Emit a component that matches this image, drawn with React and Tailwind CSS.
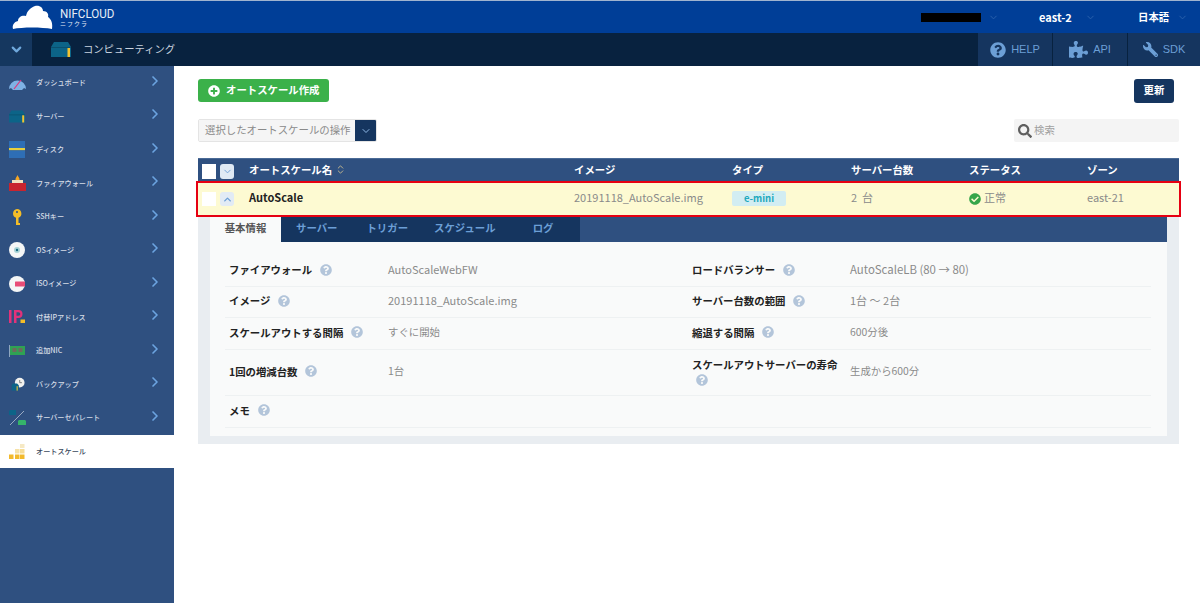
import React from "react";
import { ChevronDown, ChevronRight, ChevronUp, ChevronsUpDown } from "lucide-react";
import { FaQuestionCircle, FaPuzzlePiece, FaWrench, FaCheckCircle, FaPlusCircle, FaSearch } from "react-icons/fa";

const Server = ({ w = 18, h = 14 }) => (
  <svg width={w} height={h} viewBox="0 0 20 15">
    <path d="M3 0H17L20 5V15H0V5Z" fill="#0c6488" />
    <path d="M0 5H20V6H0Z" fill="#0a506f" />
    <rect x="16.5" y="6" width="2.5" height="9" fill="#f2c230" />
  </svg>
);

const icons = {
  dash: (
    <svg width="17" height="15" viewBox="0 0 17 15">
      <path d="M0 14A8.5 8.5 0 1 1 17 14L15 13 13 15H4L2 13Z" fill="#7fb2e5" />
      <path d="M5 14L12 5" stroke="#e0357a" strokeWidth="1.2" />
      <path d="M8.5 1V3M3 4L4 5M14 4L13 5" stroke="#2f5080" strokeWidth="0.8" />
    </svg>
  ),
  server: <Server w={16} h={13} />,
  disk: (
    <svg width="16" height="17" viewBox="0 0 16 17">
      <rect width="16" height="7" fill="#2e6eb5" />
      <rect y="7" width="16" height="2.4" fill="#e8cf3c" />
      <rect y="9.4" width="16" height="7.6" fill="#2e6eb5" />
    </svg>
  ),
  fw: (
    <svg width="17" height="16" viewBox="0 0 17 16">
      <path d="M8.5 0C9 2 11 3 10.5 5H6.5C6 3 8 2 8.500 0Z" fill="#f6a623" />
      <rect x="3" y="5" width="11" height="3" fill="#f2e2c0" />
      <rect y="8" width="17" height="8" fill="#c8242f" />
    </svg>
  ),
  key: (
    <svg width="12" height="16" viewBox="0 0 12 16">
      <path d="M6 0A4.500 4.500 0 0 1 7.500 8.700V14H9V16H5V8.700A4.500 4.500 0 0 1 6 0Z" fill="#f5bd27" />
      <circle cx="6" cy="3" r="1" fill="#2f5080" />
    </svg>
  ),
  os: (
    <svg width="16" height="16" viewBox="0 0 16 16">
      <circle cx="8" cy="8" r="8" fill="#f4f6f6" />
      <circle cx="8" cy="8" r="3" fill="#a8d3d6" />
      <circle cx="8" cy="8" r="1.200" fill="#176a80" />
    </svg>
  ),
  iso: (
    <svg width="16" height="16" viewBox="0 0 16 16">
      <circle cx="8" cy="8" r="8" fill="#f4f6f6" />
      <rect x="6" y="5.500" width="10" height="5" rx="0.500" fill="#e84d77" />
    </svg>
  ),
  ip: (
    <svg width="17" height="16" viewBox="0 0 17 16">
      <rect x="0" y="1" width="2.500" height="13" fill="#e2327a" />
      <path d="M5 1H9.500A3.500 3.500 0 0 1 9.500 9H7.500V14H5ZM7.500 3.200V6.800H9.500A1.800 1.800 0 0 0 9.500 3.200Z" fill="#e2327a" />
      <rect x="11.500" y="10.500" width="4.500" height="3.500" fill="#f5bd27" />
    </svg>
  ),
  nic: (
    <svg width="16" height="12" viewBox="0 0 16 12">
      <rect x="1" y="1" width="15" height="9" fill="#2fa253" />
      <rect width="1" height="12" fill="#8fa6bf" />
      <rect x="3.500" y="3" width="4" height="4" fill="#6d6a5c" />
      <rect x="9.500" y="3" width="4" height="4" fill="#6d6a5c" />
    </svg>
  ),
  backup: (
    <svg width="15" height="14" viewBox="0 0 17 15">
      <circle cx="11" cy="6" r="5.500" fill="#f1f1ee" />
      <path d="M11 3V6H13.500" stroke="#555" strokeWidth="0.800" fill="none" />
      <path d="M3 7H8L10 9V15H2V9Z" fill="#0c6488" />
      <rect x="7.500" y="10" width="1.200" height="5" fill="#f2c230" />
    </svg>
  ),
  sep: (
    <svg width="17" height="15" viewBox="0 0 17 15">
      <path d="M1 15L15 1" stroke="#b6c3d3" strokeWidth="0.800" />
      <path d="M1 0H7V5H0V1Z" fill="#0c6488" />
      <path d="M10 10H16L17 11V15H9V11Z" fill="#35b36a" />
    </svg>
  ),
  auto: (
    <svg width="16" height="15" viewBox="0 0 16 15">
      <rect x="11" y="0" width="4.500" height="4" fill="#f6e9c4" />
      <rect x="6" y="5" width="4.500" height="4.500" fill="#f6e2a8" />
      <rect x="11" y="5" width="4.500" height="4.500" fill="#f6dd97" />
      <rect x="0" y="10.500" width="4.500" height="4.500" fill="#f2b92c" />
      <rect x="6" y="10.500" width="4.500" height="4.500" fill="#f2b92c" />
      <rect x="11" y="10.500" width="4.500" height="4.500" fill="#f2b92c" />
    </svg>
  ),
};

const navItems = [
  ["dash", "ダッシュボード"],
  ["server", "サーバー"],
  ["disk", "ディスク"],
  ["fw", "ファイアウォール"],
  ["key", "SSHキー"],
  ["os", "OSイメージ"],
  ["iso", "ISOイメージ"],
  ["ip", "付替IPアドレス"],
  ["nic", "追加NIC"],
  ["backup", "バックアップ"],
  ["sep", "サーバーセパレート"],
];

const Help = () => <FaQuestionCircle className="text-[#b3c5da] text-[12px] shrink-0" />;

const Cell = ({ label, value, wrap, valueSize = "text-[10.400px]", labelW = "w-[163px]" }) => (
  <div className="flex items-center pb-[3px]">
    <div className={`${labelW} pl-1 shrink-0 text-[10.400px] font-bold text-[#222] leading-[15px]`}>
      {wrap ? (
        <>
          <div className="whitespace-nowrap">{label}</div>
          <div className="pl-1 pt-0.5"><Help /></div>
        </>
      ) : (
        <div className="flex items-center gap-[8px] whitespace-nowrap">{label}<Help /></div>
      )}
    </div>
    <div className={`${valueSize} text-[#8a8a8a] whitespace-nowrap`}>{value}</div>
  </div>
);

const DetailRow = ({ h, left, right }) => (
  <div className={`grid grid-cols-[463px_1fr] border-b border-[#eef1f2] ${h}`}>
    {left}
    {right || <div />}
  </div>
);

const TextCell = ({ className = "", children }) => <div className={`pb-[3px] ${className}`}>{children}</div>;

export default function App() {
  return (
    <div className="w-[1200px] h-[603px] overflow-hidden flex flex-col bg-white font-['Noto_Sans_CJK_JP','Noto_Sans',sans-serif]">
      <header className="h-[33px] shrink-0 bg-[#003e97] border-t border-[#9fb3cf] flex items-center">
        <div className="pl-[12px] flex items-center gap-[7px] w-[921px]">
          <svg width="41" height="24" viewBox="0 0 41 24">
            <path d="M1 24C0 20 2 17 6 16 6 12 10 10 14 11 15 6 18 3 23 1 28 0 31 3 31 6 35 6 37 9 36 12 39 14 41 18 40 24 30 22 10 22 1 24Z" fill="#fff" />
          </svg>
          <div className="flex flex-col text-[#e6edf6]">
            <span className="font-['Roboto',sans-serif] text-[13.500px] leading-[14px] scale-x-[0.86] origin-left">NIFCLOUD</span>
            <span className="text-[6px] leading-[8px] tracking-[1px]">ニフクラ</span>
          </div>
        </div>
        <div className="w-[60px] h-[9px] bg-black" />
        <ChevronDown size={11} className="ml-[7px] text-[#2d63ad]" />
        <span className="ml-[40px] text-[11px] font-bold text-white w-[43px]">east-2</span>
        <ChevronDown size={11} className="ml-[3px] text-[#2d63ad]" />
        <span className="ml-[42px] text-[10.400px] font-bold text-white">日本語</span>
        <ChevronDown size={11} className="ml-[8px] text-[#2d63ad]" />
      </header>

      <div className="h-[33px] shrink-0 bg-[#08223f] flex items-stretch">
        <div className="w-[32px] bg-[#15375f] flex items-center justify-center">
          <ChevronDown size={15} strokeWidth={3.500} className="text-[#6fa8dc]" />
        </div>
        <div className="pl-[19px] flex items-center w-[946px]">
          <Server w={20} h={15} />
          <span className="ml-[12px] pb-[2px] text-[10.300px] text-[#c9d3df]">コンピューティング</span>
        </div>
        <div className="flex-1 flex text-[11px] text-[#6c9fd6] font-['Liberation_Sans',sans-serif]">
          <div className="w-[75px] bg-[#15355f] border-r border-[#08223f] flex items-center justify-center gap-[5px]">
            <FaQuestionCircle className="text-[16px] text-[#6c9fd6]" />HELP
          </div>
          <div className="w-[75px] bg-[#15355f] border-r border-[#08223f] flex items-center justify-center gap-[5px]">
            <FaPuzzlePiece className="text-[19px] text-[#6c9fd6]" />API
          </div>
          <div className="flex-1 bg-[#15355f] flex items-center justify-center gap-[5px]">
            <FaWrench className="text-[15px] text-[#6c9fd6] -scale-x-100" />SDK
          </div>
        </div>
      </div>

      <div className="flex-1 flex min-h-0">
        <nav className="w-[174px] shrink-0 bg-[#2f5080]">
          {navItems.map(([k, label]) => (
            <div key={k} className="h-[33.500px] flex items-center relative">
              <div className="w-[18px] ml-[8px] mr-[10px] shrink-0 flex items-center justify-center">{icons[k]}</div>
              <span className="text-[7.150px] font-medium text-[#d5dce6] whitespace-nowrap">{label}</span>
              <ChevronRight size={16} strokeWidth={2.500} className="text-[#6ca4e0] ml-auto mr-[11px] -mt-[4px]" />
            </div>
          ))}
          <div className="h-[33.500px] flex items-center bg-white">
            <div className="w-[18px] ml-[8px] mr-[10px] shrink-0 flex items-center justify-center">{icons.auto}</div>
            <span className="text-[7.150px] font-medium text-[#3b4a5c] whitespace-nowrap">オートスケール</span>
          </div>
        </nav>

        <main className="flex-1 min-w-0 pl-[24px] pr-[21px] pt-[13px]">
          <div className="flex items-start justify-between pr-[5px]">
            <button className="w-[131px] h-[23px] bg-[#3bb14a] rounded-[3px] flex items-center pl-[10px] gap-[6px] text-white text-[10.400px] font-bold whitespace-nowrap">
              <FaPlusCircle className="text-[12px]" /><span className="pb-[2px]">オートスケール作成</span>
            </button>
            <button className="w-[40px] h-[24px] pb-[2px] bg-[#15355f] rounded-[3px] text-white text-[10.400px] font-bold">更新</button>
          </div>

          <div className="flex items-center justify-between mt-[16px]">
            <div className="flex h-[23px] w-[179px] rounded-[2px] border border-[#e4e4e4] overflow-hidden">
              <div className="flex-1 bg-[#f5f5f5] pl-[6px] pb-[2px] text-[10.400px] text-[#8a8a8a] flex items-center whitespace-nowrap">選択したオートスケールの操作</div>
              <div className="w-[21px] bg-[#15355f] flex items-center justify-center">
                <ChevronDown size={12} className="text-[#8fb8e6]" />
              </div>
            </div>
            <div className="w-[165px] h-[23px] bg-[#f4f4f4] rounded-[2px] flex items-center pl-[4px] gap-[2px] text-[10.400px] text-[#a0a0a0]">
              <FaSearch className="text-[14px] text-[#5f5f5f]" /><span className="pb-[2px]">検索</span>
            </div>
          </div>

          <div className="mt-[16px] h-[25px] bg-[#2f5080] border-t border-[#4a6a96] grid grid-cols-[51px_325px_158px_119px_118px_118px_1fr] items-center text-white text-[10.400px] font-bold">
            <div className="flex items-center pl-[4px] gap-[4px]">
              <div className="w-[14px] h-[15px] bg-white" />
              <div className="w-[14px] h-[15px] bg-[#dfe9f4] rounded-[3px] flex items-center justify-center">
                <ChevronDown size={11} className="text-[#6c9fd6]" />
              </div>
            </div>
            <TextCell className="flex items-center gap-[3px]">オートスケール名<ChevronsUpDown size={11} className="text-[#c9bb8f]" /></TextCell>
            <TextCell>イメージ</TextCell>
            <TextCell>タイプ</TextCell>
            <TextCell>サーバー台数</TextCell>
            <TextCell>ステータス</TextCell>
            <TextCell>ゾーン</TextCell>
          </div>

          <div className="relative z-10 h-[32px] bg-[#fdfad2] outline-2 outline-[#e60012] grid grid-cols-[51px_325px_158px_119px_118px_118px_1fr] items-center text-[11px] text-[#8a8a8a]">
            <div className="flex items-center pl-[4px] gap-[4px]">
              <div className="w-[14px] h-[14px] bg-white" />
              <div className="w-[14px] h-[14px] bg-[#e2ebf5] rounded-[3px] flex items-center justify-center">
                <ChevronUp size={11} strokeWidth={3} className="text-[#6c9fd6]" />
              </div>
            </div>
            <TextCell className="font-bold text-[#222]">AutoScale</TextCell>
            <TextCell>20191118_AutoScale.img</TextCell>
            <div className="flex items-center pb-[1px]">
              <span className="w-[54px] h-[15px] leading-[14px] text-center bg-[#d2edf2] rounded-[2px] text-[#1ea9bd] font-bold text-[9.500px]">e-mini</span>
            </div>
            <TextCell className="whitespace-pre">2  台</TextCell>
            <div className="flex items-center gap-[3px]"><FaCheckCircle className="text-[12px] text-[#35a64a]" /><span className="pb-[3px]">正常</span></div>
            <TextCell>east-21</TextCell>
          </div>

          <div className="h-[229px] bg-[#e9edf1] px-[12px] pb-[8px]">
            <div className="h-full bg-[#f9fafa]">
              <div className="h-[27px] bg-[#2f5080] flex text-[10.400px] font-bold">
                <div className="w-[71px] pb-[2px] bg-[#f9fafa] text-[#555] flex items-center justify-center">基本情報</div>
                <div className="w-[299px] pb-[2px] bg-[#15355f] text-[#6c9fd6] flex items-center">
                  <span className="ml-[15px]">サーバー</span>
                  <span className="ml-[29px]">トリガー</span>
                  <span className="ml-[26px]">スケジュール</span>
                  <span className="ml-[37px]">ログ</span>
                </div>
              </div>
              <div className="mt-[14px] mx-[15px] w-[926px]">
                <DetailRow h="h-[31px]" left={<Cell label="ファイアウォール" value="AutoScaleWebFW" valueSize="text-[11px]" />} right={<Cell labelW="w-[162px]" label="ロードバランサー" value="AutoScaleLB (80 → 80)" valueSize="text-[11.400px]" />} />
                <DetailRow h="h-[31px]" left={<Cell label="イメージ" value="20191118_AutoScale.img" valueSize="text-[11px]" />} right={<Cell labelW="w-[162px]" label="サーバー台数の範囲" value="1台 ～ 2台" valueSize="text-[11px]" />} />
                <DetailRow h="h-[32px]" left={<Cell label="スケールアウトする間隔" value="すぐに開始" />} right={<Cell labelW="w-[162px]" label="縮退する間隔" value="600分後" />} />
                <DetailRow h="h-[46px]" left={<Cell label="1回の増減台数" value="1台" />} right={<Cell labelW="w-[162px]" label="スケールアウトサーバーの寿命" value="生成から600分" wrap />} />
                <DetailRow h="h-[32px]" left={<Cell label="メモ" value="" />} />
              </div>
            </div>
          </div>
        </main>
      </div>
    </div>
  );
}
